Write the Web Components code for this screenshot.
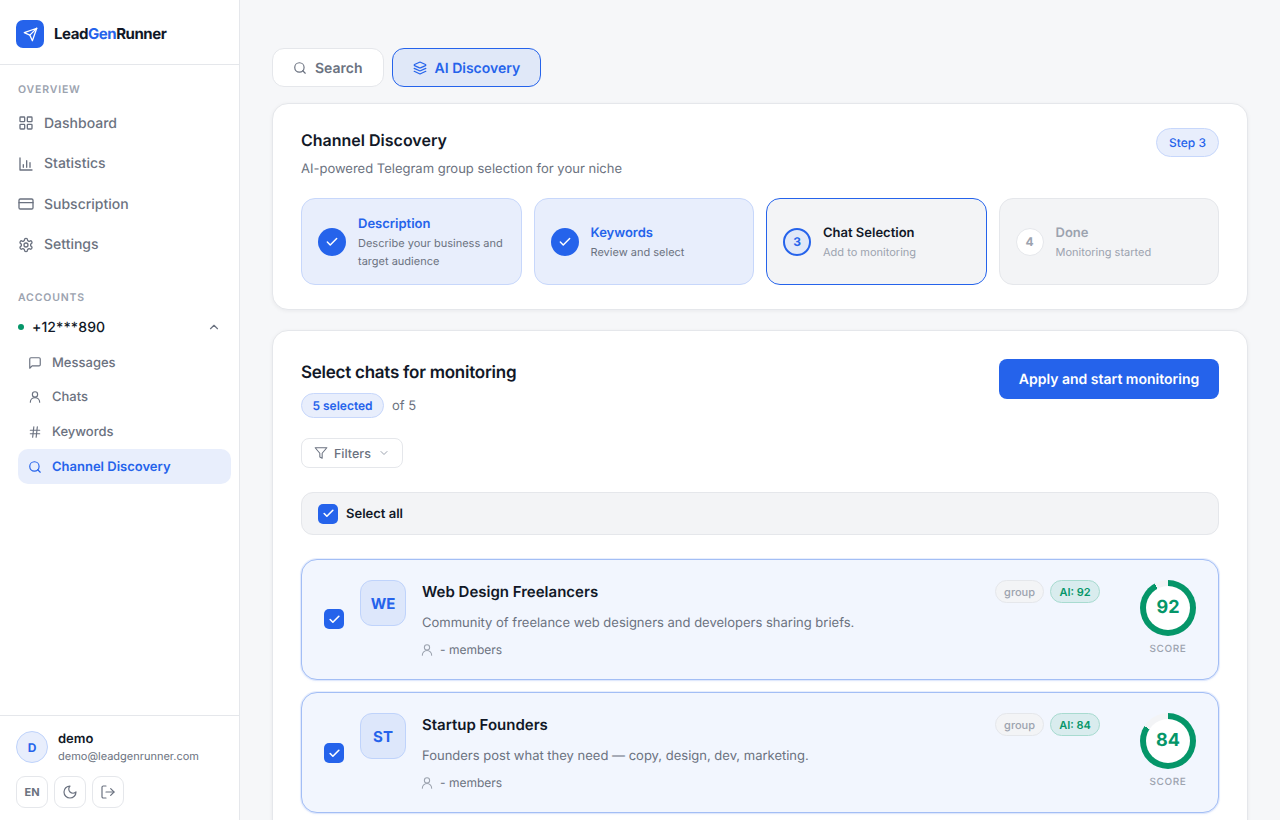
<!doctype html>
<html lang="en"><head><meta charset="utf-8"><title>LeadGenRunner</title>
<style>
html,body{margin:0;height:820px;overflow:hidden;background:#f6f7f9;font-family:Inter,"Liberation Sans",sans-serif;color:#111827;text-rendering:geometricPrecision}
</style></head><body>
<app-shell>
  <lead-sidebar slot="side"></lead-sidebar>
  <tab-row></tab-row>
  <panel-card style="--pad:24px 28px 24px;margin-top:16px">
    <discovery-head></discovery-head>
    <step-list></step-list>
  </panel-card>
  <panel-card style="--pad:28px 28px 40px;margin-top:20px">
    <select-head></select-head>
    <filter-button></filter-button>
    <select-all></select-all>
    <chat-row initials="WE" name="Web Design Freelancers" desc="Community of freelance web designers and developers sharing briefs." score="92"></chat-row>
    <chat-row style="--cb:30px" initials="ST" name="Startup Founders" desc="Founders post what they need — copy, design, dev, marketing." score="84"></chat-row>
  </panel-card>
</app-shell>
<script>
const ICONS={
send:'<path d="m22 2-7 20-4-9-9-4Z"/><path d="M22 2 11 13"/>',
grid:'<rect x="3" y="3" width="7" height="7" rx="1"/><rect x="14" y="3" width="7" height="7" rx="1"/><rect x="14" y="14" width="7" height="7" rx="1"/><rect x="3" y="14" width="7" height="7" rx="1"/>',
chart:'<path d="M3 3v18h18"/><path d="M8 17v-4"/><path d="M13 17V7"/><path d="M18 17v-7"/>',
card:'<rect x="1.5" y="4.5" width="21" height="15" rx="2"/><path d="M1.5 10h21"/>',
gear:'<path d="M12.22 2h-.44a2 2 0 0 0-2 2v.18a2 2 0 0 1-1 1.73l-.43.25a2 2 0 0 1-2 0l-.15-.08a2 2 0 0 0-2.73.73l-.22.38a2 2 0 0 0 .73 2.73l.15.1a2 2 0 0 1 1 1.72v.51a2 2 0 0 1-1 1.74l-.15.09a2 2 0 0 0-.73 2.73l.22.38a2 2 0 0 0 2.73.73l.15-.08a2 2 0 0 1 2 0l.43.25a2 2 0 0 1 1 1.73V20a2 2 0 0 0 2 2h.44a2 2 0 0 0 2-2v-.18a2 2 0 0 1 1-1.73l.43-.25a2 2 0 0 1 2 0l.15.08a2 2 0 0 0 2.73-.73l.22-.39a2 2 0 0 0-.73-2.73l-.15-.08a2 2 0 0 1-1-1.74v-.5a2 2 0 0 1 1-1.74l.15-.09a2 2 0 0 0 .73-2.73l-.22-.38a2 2 0 0 0-2.73-.73l-.15.08a2 2 0 0 1-2 0l-.43-.25a2 2 0 0 1-1-1.73V4a2 2 0 0 0-2-2z"/><circle cx="12" cy="12" r="3"/>',
up:'<path d="m18 15-6-6-6 6"/>',
down:'<path d="m6 9 6 6 6-6"/>',
msg:'<path d="M21 15a2 2 0 0 1-2 2H7l-4 4V5a2 2 0 0 1 2-2h14a2 2 0 0 1 2 2z"/>',
user:'<path d="M20 21a8 8 0 0 0-16 0"/><circle cx="12" cy="7.5" r="4.5"/>',
hash:'<path d="M4 9h16"/><path d="M4 15h16"/><path d="M10 3 8 21"/><path d="M16 3l-2 18"/>',
search:'<circle cx="11" cy="11" r="8"/><path d="m21 21-4.3-4.3"/>',
moon:'<path d="M12 3a6 6 0 0 0 9 9 9 9 0 1 1-9-9Z"/>',
logout:'<path d="M9 21H5a2 2 0 0 1-2-2V5a2 2 0 0 1 2-2h4"/><path d="m16 17 5-5-5-5"/><path d="M21 12H9"/>',
layers:'<path d="m12.83 2.18a2 2 0 0 0-1.66 0L2.6 6.08a1 1 0 0 0 0 1.83l8.58 3.91a2 2 0 0 0 1.66 0l8.58-3.9a1 1 0 0 0 0-1.83Z"/><path d="m22 17.65-9.17 4.16a2 2 0 0 1-1.66 0L2 17.65"/><path d="m22 12.65-9.17 4.16a2 2 0 0 1-1.66 0L2 12.65"/>',
filter:'<path d="M22 3H2l8 9.46V19l4 2v-8.54L22 3z"/>',
check:'<path d="M20 6 9 17l-5-5"/>'};
function ic(n,s,c,w){return `<svg width="${s}" height="${s}" viewBox="0 0 24 24" fill="none" stroke="${c||'currentColor'}" stroke-width="${w||2}" stroke-linecap="round" stroke-linejoin="round" style="display:block;flex:none">${ICONS[n]}</svg>`}
function def(name,css,html){
  customElements.define(name,class extends HTMLElement{
    constructor(){super();this.attachShadow({mode:'open'})}
    connectedCallback(){const a=n=>this.getAttribute(n)||'';this.shadowRoot.innerHTML=`<style>${css}</style>`+(typeof html==='function'?html(a):html)}
  });
}
def('app-shell',`:host{display:flex;height:820px;overflow:hidden}
main{flex:1;min-width:0;padding:48px 32px 0;box-sizing:border-box}`,
`<slot name="side"></slot><main><slot></slot></main>`);
def('panel-card',`:host{display:block;background:#fff;border:1px solid #e5e7eb;border-radius:16px;box-shadow:0 1px 4px rgba(17,24,39,.06);padding:var(--pad)}`,`<slot></slot>`);
def('nav-item',`:host{display:flex;align-items:center;gap:10px;height:40.4px;padding-left:18px;font-size:14px;font-weight:500;color:#6b7280}`,a=>`${ic(a('icon'),16)}<span>${a('label')}</span>`);
def('sub-item',`:host{display:flex;align-items:center;gap:10px;height:34.6px;margin:0 8px 0 18px;padding-left:10px;font-size:13px;font-weight:500;color:#6b7280;border-radius:10px}
:host([active]){background:#e8eefc;color:#2563eb;font-weight:600}`,a=>`${ic(a('icon'),14)}<span>${a('label')}</span>`);
def('icon-btn',`:host{display:flex;align-items:center;justify-content:center;width:32px;height:32px;box-sizing:border-box;border:1px solid #e5e7eb;border-radius:9px;background:#fff;color:#6b7280;font-size:11px;font-weight:700}`,a=>a('icon')?ic(a('icon'),16,null,1.8):`<slot></slot>`);
def('lead-sidebar',`:host{display:flex;flex-direction:column;width:240px;flex:none;height:820px;box-sizing:border-box;background:#fff;border-right:1px solid #e5e7eb}
.brand{display:flex;align-items:center;gap:10px;height:60px;padding:4px 0 0 16px;border-bottom:1px solid #e5e7eb;flex:none}
.logo{width:28px;height:28px;border-radius:7px;background:#2563eb;display:flex;align-items:center;justify-content:center}
.name{font-size:15px;font-weight:700;letter-spacing:-.45px;color:#111827;margin-bottom:1px}.name b{font-weight:700;color:#2563eb}
.lab{font-size:10.5px;font-weight:600;letter-spacing:.84px;color:#9ca3af;padding-left:18px;line-height:13px}
.ov{margin-top:18px;margin-bottom:7.3px}.ac{margin-top:25.7px;margin-bottom:5px}
.phone{display:flex;align-items:center;height:37px;padding:0 18px;font-size:14px;font-weight:500;color:#111827;letter-spacing:.1px}
.dot{width:6px;height:6px;border-radius:50%;background:#059669;margin-right:8px}.phone svg{margin-left:auto;color:#6b7280}
.grow{flex:1}
.foot{border-top:1px solid #e5e7eb;padding:13px 16px 12px;flex:none}
.who{display:flex;align-items:flex-start;gap:10px;height:36px}
.av{width:32px;height:32px;margin-top:2px;box-sizing:border-box;border-radius:50%;background:#e8eefc;border:1px solid #bfd3fb;color:#2563eb;font-size:12px;font-weight:700;display:flex;align-items:center;justify-content:center}
.u{font-size:13px;font-weight:600;color:#111827;line-height:20px}.m{font-size:11px;color:#6b7280;line-height:14px}
.btns{display:flex;gap:6px;margin-top:11px}`,
`<div class="brand"><div class="logo">${ic('send',15,'#fff')}</div><div class="name">Lead<b>Gen</b>Runner</div></div>
<div class="lab ov">OVERVIEW</div>
<nav-item icon="grid" label="Dashboard"></nav-item><nav-item icon="chart" label="Statistics"></nav-item><nav-item icon="card" label="Subscription"></nav-item><nav-item icon="gear" label="Settings"></nav-item>
<div class="lab ac">ACCOUNTS</div>
<div class="phone"><span class="dot"></span><span>+12***890</span>${ic('up',14)}</div>
<sub-item icon="msg" label="Messages"></sub-item><sub-item icon="user" label="Chats"></sub-item><sub-item icon="hash" label="Keywords"></sub-item><sub-item active icon="search" label="Channel Discovery"></sub-item>
<div class="grow"></div>
<div class="foot"><div class="who"><div class="av">D</div><div><div class="u">demo</div><div class="m">demo@leadgenrunner.com</div></div></div>
<div class="btns"><icon-btn>EN</icon-btn><icon-btn icon="moon"></icon-btn><icon-btn icon="logout"></icon-btn></div></div>`);
def('tab-btn',`:host{display:flex;align-items:center;gap:8px;height:39px;box-sizing:border-box;padding:0 20px;border:1px solid #e5e7eb;border-radius:12px;background:#fff;color:#6b7280;font-size:14px;font-weight:600}
:host([active]){background:#e0e8f8;border-color:#2563eb;color:#2563eb}span{padding-top:2px}`,a=>`${ic(a('icon'),14)}<span>${a('label')}</span>`);
def('tab-row',`:host{display:flex;gap:8px}`,`<tab-btn icon="search" label="Search"></tab-btn><tab-btn active icon="layers" label="AI Discovery"></tab-btn>`);
def('discovery-head',`:host{display:flex;justify-content:space-between;align-items:flex-start}
h2{margin:0;font-size:16px;font-weight:600;line-height:24px;color:#111827}
p{margin:6px 0 0;font-size:13px;line-height:22px;color:#6b7280}
.pill{height:29px;box-sizing:border-box;padding:0 12px;display:flex;align-items:center;border:1px solid #c7d7fb;border-radius:15px;background:#e8eefc;color:#2563eb;font-size:12px;font-weight:500}`,
`<div><h2>Channel Discovery</h2><p>AI-powered Telegram group selection for your niche</p></div><div class="pill">Step 3</div>`);
def('step-card',`:host{display:flex;align-items:center;gap:12px;box-sizing:border-box;min-width:0;padding:14.5px 16px;min-height:87px;border:1px solid #c7d7fb;border-radius:14px;background:#e8eefc}
.c{width:28px;height:28px;box-sizing:border-box;flex:none;border-radius:50%;background:#2563eb;display:flex;align-items:center;justify-content:center;font-size:12px;font-weight:700}
.t{font-size:13px;font-weight:600;line-height:20px;color:#2563eb}.s{font-size:11px;line-height:18px;color:#6b7280}
:host([state=current]){background:#f3f4f6;border-color:#2563eb}
:host([state=current]) .c{background:#e0e8f8;border:2px solid #2563eb;color:#2563eb}
:host([state=current]) .t{color:#111827}:host([state=current]) .s{color:#9ca3af}
:host([state=todo]){background:#f3f4f6;border-color:#e5e7eb}
:host([state=todo]) .c{background:#fff;border:1px solid #e5e7eb;color:#9ca3af}
:host([state=todo]) .t,:host([state=todo]) .s{color:#9ca3af}`,
a=>`<div class="c">${a('n')||ic('check',14,'#fff',2.5)}</div><div><div class="t">${a('title')}</div><div class="s">${a('sub')}</div></div>`);
def('step-list',`:host{display:grid;grid-template-columns:repeat(4,1fr);gap:12px;margin-top:18px}`,
`<step-card title="Description" sub="Describe your business and target audience"></step-card><step-card title="Keywords" sub="Review and select"></step-card><step-card state="current" n="3" title="Chat Selection" sub="Add to monitoring"></step-card><step-card state="todo" n="4" title="Done" sub="Monitoring started"></step-card>`);
def('select-head',`:host{display:flex;justify-content:space-between;align-items:flex-start}
h2{margin:0;font-size:17px;font-weight:600;line-height:28px;letter-spacing:-.25px;color:#111827}
.r{display:flex;align-items:center;gap:8px;margin-top:6px;font-size:13px;color:#6b7280}
.p{height:25px;box-sizing:border-box;padding:0 10px 0 10px;min-width:83px;justify-content:center;display:flex;align-items:center;border:1px solid #c7d7fb;border-radius:13px;background:#e8eefc;color:#2563eb;font-size:12px;font-weight:600}
.b{width:220px;height:40px;border-radius:8px;background:#2563eb;color:#fff;font-size:14px;font-weight:600;display:flex;align-items:center;justify-content:center}`,
`<div><h2>Select chats for monitoring</h2><div class="r"><span class="p">5 selected</span><span>of 5</span></div></div><div class="b">Apply and start monitoring</div>`);
def('filter-button',`:host{display:inline-flex;align-items:center;gap:6px;height:30px;box-sizing:border-box;margin-top:20px;padding:0 12px;border:1px solid #e5e7eb;border-radius:8px;background:#fff;color:#6b7280;font-size:12.5px;font-weight:500;vertical-align:top}span{padding-top:2px}svg:last-child{margin-left:1px}`,
`${ic('filter',14,null,1.8)}<span>Filters</span>${ic('down',12,'#9ca3af')}`);
def('check-box',`:host{display:flex;align-items:center;justify-content:center;width:20px;height:20px;flex:none;border-radius:5px;background:#2563eb}`,ic('check',13,'#fff',3));
def('select-all',`:host{display:flex;align-items:center;gap:8px;height:43px;box-sizing:border-box;margin-top:24px;margin-bottom:24px;padding:0 16px;background:#f3f4f6;border:1px solid #e5e7eb;border-radius:12px;font-size:13px;font-weight:600;color:#111827}`,
`<check-box></check-box><span>Select all</span>`);
def('chat-row',`:host{display:flex;box-sizing:border-box;height:121px;margin-bottom:12px;padding:20px 22px 0;background:#f2f6fe;border:1px solid #a3bef5;border-radius:16px;box-shadow:0 0 0 1px rgba(37,99,235,.1),0 1px 3px rgba(37,99,235,.08)}
check-box{margin-top:var(--cb,29px);margin-right:16px;align-self:flex-start}
.a{width:46px;height:46px;box-sizing:border-box;flex:none;border-radius:12px;background:#dde7fb;border:1px solid #bfd3fb;color:#2563eb;font-size:15px;font-weight:700;display:flex;align-items:center;justify-content:center;margin-right:16px}
.m{flex:1;min-width:0}
.top{display:flex;align-items:center;justify-content:space-between;height:23px}
.n{font-size:15px;font-weight:600;color:#111827}
.tags{display:flex;gap:6px}
.tag{height:23px;box-sizing:border-box;padding:0 8px;display:flex;align-items:center;justify-content:center;border-radius:12px;font-size:11px;font-weight:500;border:1px solid #e5e7eb;background:#f3f4f6;color:#9ca3af}
.ai{background:#d9ecee;border-color:#a8dbd0;color:#059669;font-weight:600;width:50px;padding:0}
.d{font-size:13px;line-height:20px;color:#6b7280;margin-top:10px}
.k{display:flex;align-items:center;gap:6px;font-size:12px;line-height:18px;color:#6b7280;margin-top:8px}.k svg{color:#9ca3af;margin-left:-2px}
.s{width:56px;margin-left:40px;flex:none;display:flex;flex-direction:column;align-items:center}
.ring{width:56px;height:56px;border-radius:50%;display:flex;align-items:center;justify-content:center}
.i{width:44px;height:44px;box-sizing:border-box;padding-bottom:2px;border-radius:50%;background:#fff;display:flex;align-items:center;justify-content:center;color:#059669;font-size:18px;font-weight:700}
.l{font-size:10px;font-weight:500;letter-spacing:.6px;color:#9ca3af;line-height:14px;margin-top:6px}`,
a=>`<check-box></check-box><div class="a">${a('initials')}</div><div class="m"><div class="top"><span class="n">${a('name')}</span><span class="tags"><span class="tag">group</span><span class="tag ai">AI: ${a('score')}</span></span></div><div class="d">${a('desc')}</div><div class="k">${ic('user',14,null,1.8)}<span>- members</span></div></div><div class="s"><div class="ring" style="background:conic-gradient(#059669 ${a('score')}%,#f3f4f6 0)"><div class="i">${a('score')}</div></div><div class="l">SCORE</div></div>`);
</script>
</body></html>
